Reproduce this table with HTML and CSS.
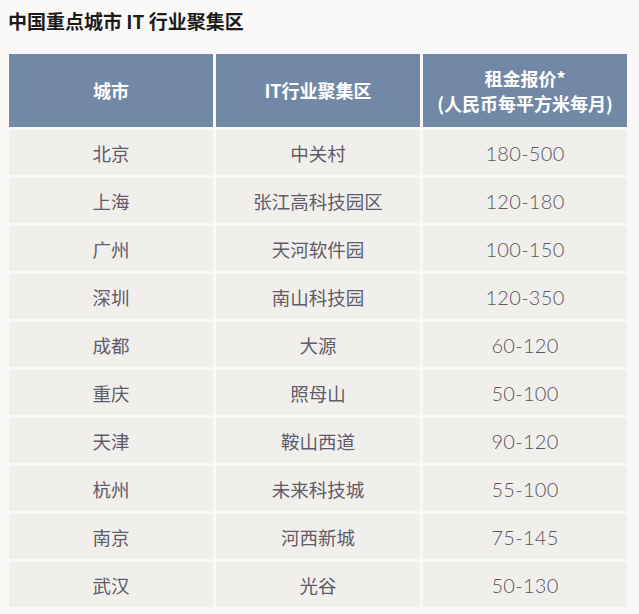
FILE: index.html
```html
<!DOCTYPE html>
<html lang="zh-CN">
<head>
<meta charset="utf-8">
<title>中国重点城市 IT 行业聚集区</title>
<link rel="stylesheet" href="styles.css">
</head>
<body>
<main class="page">
  <h1 class="title">中国重点城市 IT 行业聚集区</h1>
  <div class="table">
    <div class="cell head">城市</div>
    <div class="cell head">IT行业聚集区</div>
    <div class="cell head"><span>租金报价*</span><span>(人民币每平方米每月)</span></div>

    <div class="cell">北京</div><div class="cell">中关村</div><div class="cell num">180-500</div>
    <div class="cell">上海</div><div class="cell">张江高科技园区</div><div class="cell num">120-180</div>
    <div class="cell">广州</div><div class="cell">天河软件园</div><div class="cell num">100-150</div>
    <div class="cell">深圳</div><div class="cell">南山科技园</div><div class="cell num">120-350</div>
    <div class="cell">成都</div><div class="cell">大源</div><div class="cell num">60-120</div>
    <div class="cell">重庆</div><div class="cell">照母山</div><div class="cell num">50-100</div>
    <div class="cell">天津</div><div class="cell">鞍山西道</div><div class="cell num">90-120</div>
    <div class="cell">杭州</div><div class="cell">未来科技城</div><div class="cell num">55-100</div>
    <div class="cell">南京</div><div class="cell">河西新城</div><div class="cell num">75-145</div>
    <div class="cell">武汉</div><div class="cell">光谷</div><div class="cell num">50-130</div>
  </div>
</main>
</body>
</html>
```

FILE: styles.css
```css
html, body {
  margin: 0;
  background: #fbf9f8;
}
.page {
  padding: 8px 12px 0 9px;
  font-family: "Noto Sans CJK SC", "Noto Sans", sans-serif;
}
.title {
  margin: 0 0 20px -1px;
  font-size: 19px;
  line-height: 26px;
  font-weight: 700;
  color: #1b1b1b;
}
.table {
  display: grid;
  grid-template-columns: 204px 204px 204px;
  grid-template-rows: 73px;
  grid-auto-rows: 45px;
  gap: 3px;
}
.cell {
  background: #f1efec;
  color: #5f5b68;
  font-size: 18.5px;
  display: flex;
  flex-direction: column;
  align-items: center;
  justify-content: center;
  text-align: center;
}
.num {
  font-family: "Lato", "Noto Sans", sans-serif;
  font-size: 20px;
  font-weight: 300;
  letter-spacing: 0.3px;
  color: #5a5663;
}
.head {
  background: #7189a7;
  color: #ffffff;
  font-weight: 700;
  font-size: 18px;
  line-height: 25px;
}
```
